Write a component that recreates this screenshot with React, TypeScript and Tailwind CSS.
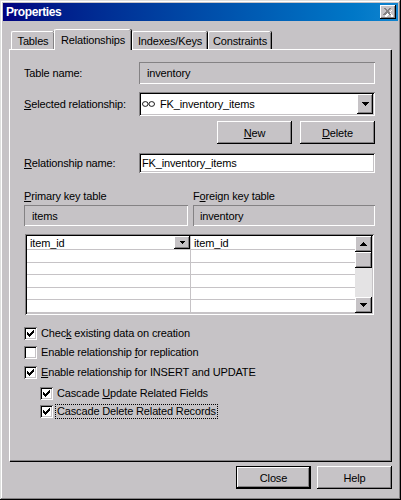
const raised = 'shadow-[inset_-1px_-1px_0_#000,inset_1px_1px_0_#fff,inset_-2px_-2px_0_#848284]'
const sunken = 'shadow-[inset_1px_1px_0_#848284,inset_-1px_-1px_0_#fff,inset_2px_2px_0_#000,inset_-2px_-2px_0_#c6c3c6]'
const etched = 'shadow-[inset_1px_1px_0_#848284,inset_-1px_-1px_0_#fff]'

function Arrow({ up = false }: { up?: boolean }) {
  return (
    <svg width="7" height="4" viewBox="0 0 7 4" shapeRendering="crispEdges">
      <path d={up ? 'M3 0h1v1h1v1h1v1h1v1H0V3h1V2h1V1h1z' : 'M0 0h7v1H6v1H5v1H4v1H3V3H2V2H1V1H0z'} fill="#000" />
    </svg>
  )
}

function Check() {
  return (
    <svg width="7" height="7" viewBox="0 0 7 7" shapeRendering="crispEdges">
      <path d="M6 0h1v3H6v1H5v1H4v1H3v1H2V6H1V5H0V2h1v1h1v1h1V3h1V2h1V1h1z" fill="#000" />
    </svg>
  )
}

function Box({ checked }: { checked: boolean }) {
  return (
    <div className={`w-[13px] h-[13px] bg-white flex items-center justify-center shrink-0 ${sunken}`}>
      {checked && <Check />}
    </div>
  )
}

function Tab({ label, active = false, width }: { label: string; active?: boolean; width: string }) {
  if (active) {
    return (
      <div className={`${width} h-[21px] bg-[#c6c3c6] border-l border-t border-white rounded-t-[2px] shadow-[inset_-1px_0_0_#848284,1px_0_0_#000] flex items-start justify-center pt-[3px] relative z-10`}>
        {label}
      </div>
    )
  }
  return (
    <div className={`${width} h-[18px] mt-[2px] border-l border-t border-white rounded-t-[2px] shadow-[inset_-1px_0_0_#848284,1px_0_0_#000] flex items-center justify-center`}>
      {label}
    </div>
  )
}

function Button({ children, width, isDefault = false }: { children: React.ReactNode; width: string; isDefault?: boolean }) {
  return (
    <div className={`${width} flex items-center justify-center ${isDefault ? 'h-[23px] border border-black shadow-[inset_-1px_-1px_0_#000,inset_1px_1px_0_#fff,inset_-2px_-2px_0_#848284]' : `h-[23px] ${raised}`}`}>
      {children}
    </div>
  )
}

function GridRow({ first = false }: { first?: boolean }) {
  return (
    <div className="h-[14px] flex border-b border-[#c6c3c6] bg-white">
      <div className="w-[154px] flex-1 border-r border-[#c6c3c6] flex items-center justify-between">
        {first && <span className="pl-[3px]">item_id</span>}
        {first && (
          <div className={`w-[16px] h-[13px] bg-[#c6c3c6] flex items-center justify-center ${raised}`}>
            <svg width="5" height="3" viewBox="0 0 5 3" shapeRendering="crispEdges"><path d="M0 0h5v1H4v1H3v1H2V2H1V1H0z" fill="#000" /></svg>
          </div>
        )}
      </div>
      <div className="w-[164px] flex items-center pl-[3px]">{first && 'item_id'}</div>
    </div>
  )
}

function Option({ checked, children, className = '', focus = false }: { checked: boolean; children: React.ReactNode; className?: string; focus?: boolean }) {
  return (
    <div className={`flex items-center h-[13px] ${className}`}>
      <Box checked={checked} />
      <span className={`ml-[3px] px-[1px] leading-[13px] ${focus ? 'outline-1 outline-dotted outline-black' : ''}`}>{children}</span>
    </div>
  )
}

export default function App() {
  return (
    <div className={`w-[401px] h-[500px] bg-[#c6c3c6] p-[3px] flex flex-col text-[11px] leading-[14px] tracking-[-0.15px] text-black font-['Liberation_Sans',Arial,sans-serif] shadow-[inset_-1px_-1px_0_#000,inset_1px_1px_0_#dedfde,inset_-2px_-2px_0_#848284,inset_2px_2px_0_#fff]`}>
      {/* title bar */}
      <div className="h-[18px] shrink-0 bg-gradient-to-r from-[#000080] to-[#1084d0] flex items-center justify-between pl-[3px] pr-[2px]">
        <span className="text-white font-bold text-[12px] tracking-[-0.4px]">Properties</span>
        <div className={`w-[16px] h-[14px] bg-[#c6c3c6] flex items-center justify-center ${raised}`}>
          <svg width="10" height="9" viewBox="0 0 10 9" shapeRendering="crispEdges">
            <path d="M2 1h2v1h1v1h1V2h1V1h2L7 4l3 4H8L6 5 3 8H1l3-4z" fill="#fff" transform="translate(0.5 0.5)" />
            <path d="M1 0h2v1h1v1h1V1h1V0h2L6 3l2 4H6L4 5 2 7H0l3-4z" fill="#848284" />
          </svg>
        </div>
      </div>

      {/* tabs */}
      <div className="flex mt-[8px] ml-[8px] h-[21px] -mb-px shrink-0">
        <Tab label="Tables" width="w-[43px]" />
        <Tab label="Relationships" width="w-[77px]" active />
        <Tab label="Indexes/Keys" width="w-[75px] ml-px" />
        <Tab label="Constraints" width="w-[63px] ml-px" />
      </div>

      {/* panel */}
      <div className="mx-[6px] w-[382px] h-[412px] border-l border-t border-white shadow-[inset_-1px_-1px_0_#848284,1px_1px_0_#000] pt-[12px] pl-[14px] flex flex-col">
        <div className="flex items-center h-[22px]">
          <div className="w-[115px]">Table name:</div>
          <div className={`w-[236px] h-[22px] flex items-center pl-[8px] ${etched}`}>inventory</div>
        </div>

        <div className="flex items-center h-[24px] mt-[8px]">
          <div className="w-[115px]"><u>S</u>elected relationship:</div>
          <div className={`w-[236px] h-[24px] bg-white flex items-center justify-between pl-[3px] pr-[2px] ${sunken}`}>
            <div className="flex items-center">
              <svg width="13" height="6" viewBox="0 0 13 6" fill="none" stroke="#000" strokeWidth="0.9">
                <ellipse cx="3.3" cy="3" rx="2.8" ry="2.4" />
                <ellipse cx="9.7" cy="3" rx="2.8" ry="2.4" />
              </svg>
              <span className="ml-[5px]">FK_inventory_items</span>
            </div>
            <div className={`w-[16px] h-[20px] bg-[#c6c3c6] flex items-center justify-center ${raised}`}>
              <Arrow />
            </div>
          </div>
        </div>

        <div className="flex h-[23px] mt-[5px] ml-[193px] gap-[8px]">
          <Button width="w-[75px]"><span><u>N</u>ew</span></Button>
          <Button width="w-[75px]"><span><u>D</u>elete</span></Button>
        </div>

        <div className="flex items-center h-[20px] mt-[9px]">
          <div className="w-[115px]"><u>R</u>elationship name:</div>
          <div className={`w-[236px] h-[20px] bg-white flex items-center pl-[3px] ${sunken}`}>FK_inventory_items</div>
        </div>

        <div className="flex h-[14px] mt-[16px]">
          <div className="w-[169px]"><u>P</u>rimary key table</div>
          <div>F<u>o</u>reign key table</div>
        </div>

        <div className="flex h-[21px] mt-[2px] gap-[5px]">
          <div className={`w-[164px] flex items-center pl-[8px] ${etched}`}>items</div>
          <div className={`w-[182px] flex items-center pl-[7px] ${etched}`}>inventory</div>
        </div>

        {/* column grid */}
        <div className={`w-[349px] h-[81px] ml-px mt-[8px] p-[2px] flex ${sunken}`}>
          <div className="w-[328px] overflow-hidden flex flex-col bg-white">
            <GridRow first />
            <GridRow />
            <GridRow />
            <GridRow />
            <GridRow />
            <GridRow />
          </div>
          <div className="w-[17px] flex flex-col bg-[#e4e3e4]">
            <div className={`h-[16px] bg-[#c6c3c6] flex items-center justify-center shrink-0 ${raised}`}><Arrow up /></div>
            <div className={`h-[16px] bg-[#c6c3c6] shrink-0 ${raised}`} />
            <div className="flex-1" />
            <div className={`h-[16px] bg-[#c6c3c6] flex items-center justify-center shrink-0 ${raised}`}><Arrow /></div>
          </div>
        </div>

        <Option checked className="mt-[12px]">Chec<u>k</u> existing data on creation</Option>
        <Option checked={false} className="mt-[6px]">Enable relationship <u>f</u>or replication</Option>
        <Option checked className="mt-[7px]"><u>E</u>nable relationship for INSERT and UPDATE</Option>
        <Option checked className="mt-[8px] ml-[16px]">Cascade <u>U</u>pdate Related Fields</Option>
        <Option checked focus className="mt-[5px] ml-[16px]">Cascade Delete Related Records</Option>
      </div>

      {/* footer buttons */}
      <div className="flex justify-end gap-[6px] mt-[5px] mr-[6px]">
        <Button width="w-[75px]" isDefault>Close</Button>
        <Button width="w-[75px]">Help</Button>
      </div>
    </div>
  )
}
